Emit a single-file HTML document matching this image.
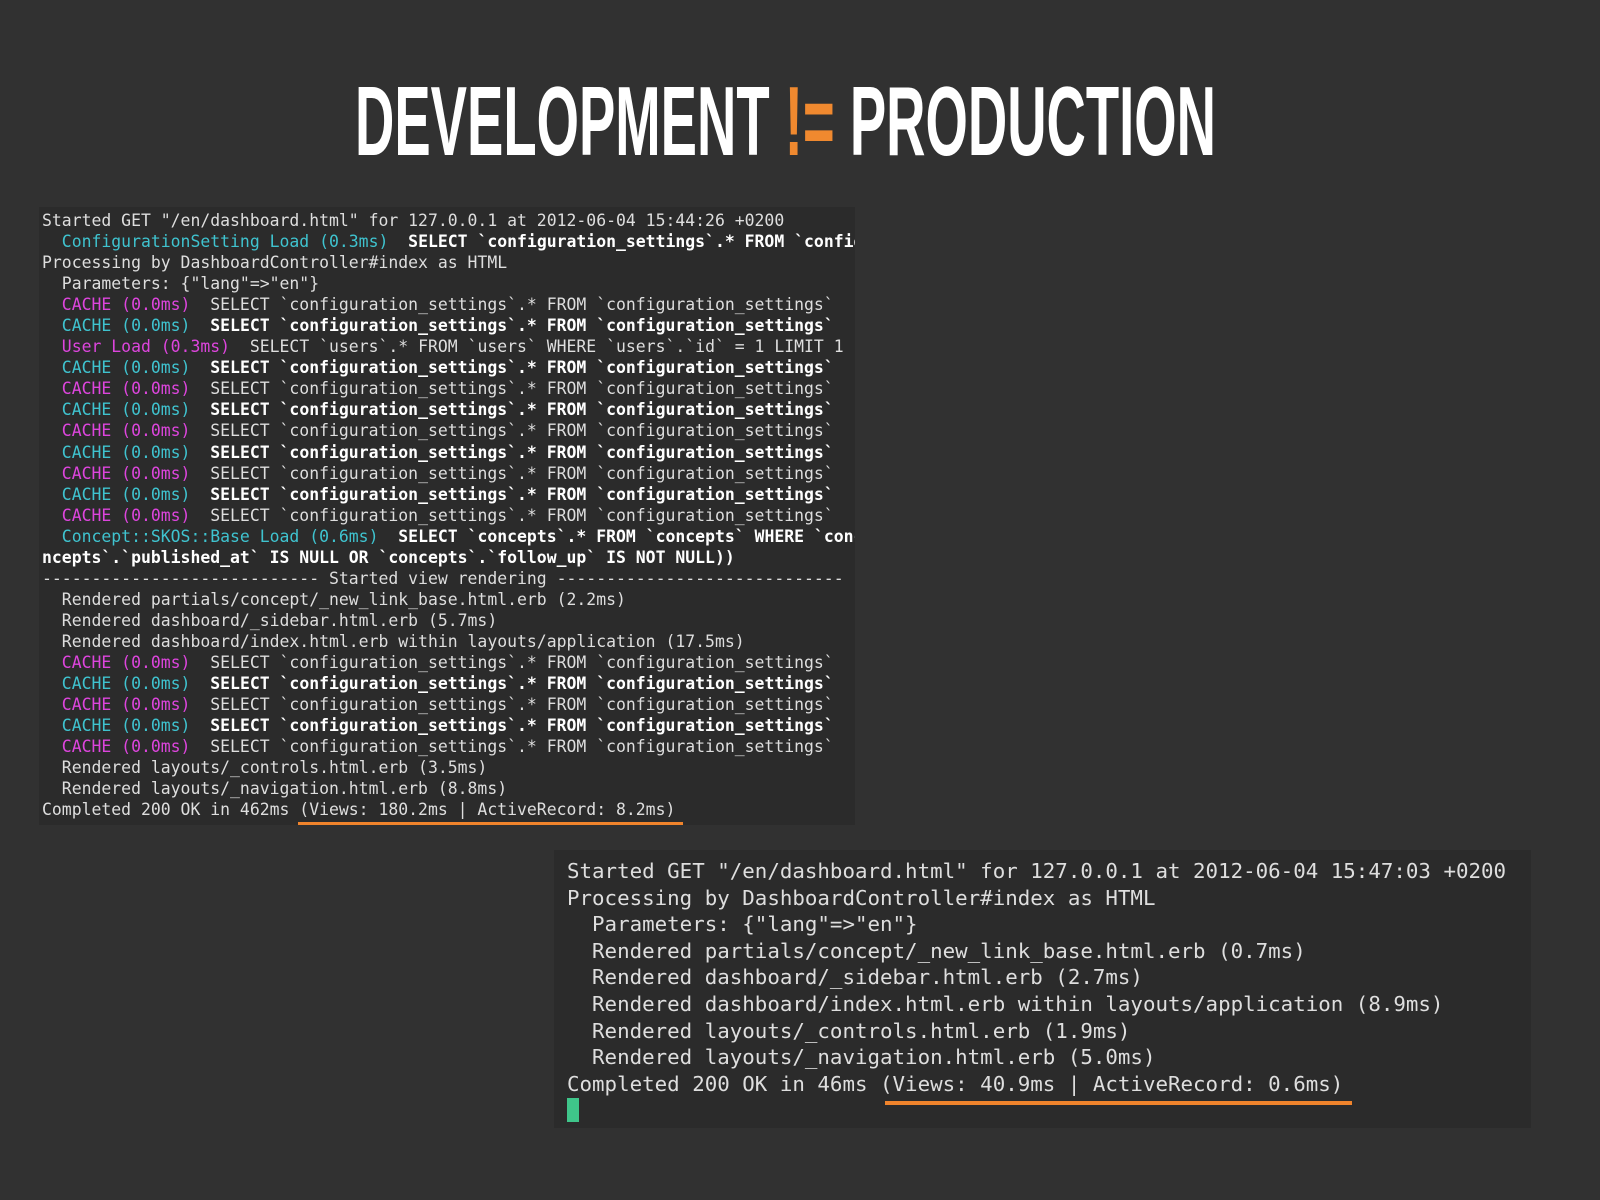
<!DOCTYPE html>
<html><head><meta charset="utf-8">
<style>
html,body{margin:0;padding:0;background:#313131;width:1600px;height:1200px;overflow:hidden;position:relative}
.p1{position:absolute;left:39px;top:207px;width:816px;height:618px;background:#2b2b2b;overflow:hidden}
.p1 pre{margin:0;position:absolute;left:3px;top:3px;font:16.45px/21.05px "DejaVu Sans Mono","Liberation Mono",monospace;color:#dedede;white-space:pre}
.p2{position:absolute;left:554px;top:850px;width:977px;height:278px;background:#2b2b2b}
.p2 pre{margin:0;position:absolute;left:13px;top:8px;font:20.8px/26.6px "DejaVu Sans Mono","Liberation Mono",monospace;color:#dedede;white-space:pre}
.c{color:#3fc3cf}.m{color:#dd45dd}b{color:#fff}
.u1{position:absolute;left:298px;top:822px;width:385px;height:3px;background:#f0842c}
.u2{position:absolute;left:885px;top:1101px;width:467px;height:4px;background:#f0842c}
.cur{position:absolute;left:567px;top:1098px;width:12px;height:24px;background:#3fc58a}
</style></head><body>
<svg style="position:absolute;left:0;top:0" width="1600" height="170">
<text x="355" y="155" textLength="861" lengthAdjust="spacingAndGlyphs" font-family="Liberation Sans Narrow, Liberation Sans, sans-serif" font-weight="bold" font-size="98" fill="#fff">DEVELOPMENT <tspan fill="#f0892f">!=</tspan> PRODUCTION</text>
</svg>
<div class="p1"><pre>Started GET "/en/dashboard.html" for 127.0.0.1 at 2012-06-04 15:44:26 +0200
  <span class="c">ConfigurationSetting Load (0.3ms)</span>  <b>SELECT `configuration_settings`.* FROM `configuration_settings`</b>
Processing by DashboardController#index as HTML
  Parameters: {"lang"=>"en"}
  <span class="m">CACHE (0.0ms)</span>  SELECT `configuration_settings`.* FROM `configuration_settings`
  <span class="c">CACHE (0.0ms)</span>  <b>SELECT `configuration_settings`.* FROM `configuration_settings`</b>
  <span class="m">User Load (0.3ms)</span>  SELECT `users`.* FROM `users` WHERE `users`.`id` = 1 LIMIT 1
  <span class="c">CACHE (0.0ms)</span>  <b>SELECT `configuration_settings`.* FROM `configuration_settings`</b>
  <span class="m">CACHE (0.0ms)</span>  SELECT `configuration_settings`.* FROM `configuration_settings`
  <span class="c">CACHE (0.0ms)</span>  <b>SELECT `configuration_settings`.* FROM `configuration_settings`</b>
  <span class="m">CACHE (0.0ms)</span>  SELECT `configuration_settings`.* FROM `configuration_settings`
  <span class="c">CACHE (0.0ms)</span>  <b>SELECT `configuration_settings`.* FROM `configuration_settings`</b>
  <span class="m">CACHE (0.0ms)</span>  SELECT `configuration_settings`.* FROM `configuration_settings`
  <span class="c">CACHE (0.0ms)</span>  <b>SELECT `configuration_settings`.* FROM `configuration_settings`</b>
  <span class="m">CACHE (0.0ms)</span>  SELECT `configuration_settings`.* FROM `configuration_settings`
  <span class="c">Concept::SKOS::Base Load (0.6ms)</span>  <b>SELECT `concepts`.* FROM `concepts` WHERE `concepts`</b>
<b>ncepts`.`published_at` IS NULL OR `concepts`.`follow_up` IS NOT NULL))</b>
---------------------------- Started view rendering -----------------------------
  Rendered partials/concept/_new_link_base.html.erb (2.2ms)
  Rendered dashboard/_sidebar.html.erb (5.7ms)
  Rendered dashboard/index.html.erb within layouts/application (17.5ms)
  <span class="m">CACHE (0.0ms)</span>  SELECT `configuration_settings`.* FROM `configuration_settings`
  <span class="c">CACHE (0.0ms)</span>  <b>SELECT `configuration_settings`.* FROM `configuration_settings`</b>
  <span class="m">CACHE (0.0ms)</span>  SELECT `configuration_settings`.* FROM `configuration_settings`
  <span class="c">CACHE (0.0ms)</span>  <b>SELECT `configuration_settings`.* FROM `configuration_settings`</b>
  <span class="m">CACHE (0.0ms)</span>  SELECT `configuration_settings`.* FROM `configuration_settings`
  Rendered layouts/_controls.html.erb (3.5ms)
  Rendered layouts/_navigation.html.erb (8.8ms)
Completed 200 OK in 462ms (Views: 180.2ms | ActiveRecord: 8.2ms)</pre></div>
<div class="u1"></div>
<div class="p2"><pre>Started GET "/en/dashboard.html" for 127.0.0.1 at 2012-06-04 15:47:03 +0200
Processing by DashboardController#index as HTML
  Parameters: {"lang"=>"en"}
  Rendered partials/concept/_new_link_base.html.erb (0.7ms)
  Rendered dashboard/_sidebar.html.erb (2.7ms)
  Rendered dashboard/index.html.erb within layouts/application (8.9ms)
  Rendered layouts/_controls.html.erb (1.9ms)
  Rendered layouts/_navigation.html.erb (5.0ms)
Completed 200 OK in 46ms (Views: 40.9ms | ActiveRecord: 0.6ms)</pre></div>
<div class="u2"></div>
<div class="cur"></div>
</body></html>
